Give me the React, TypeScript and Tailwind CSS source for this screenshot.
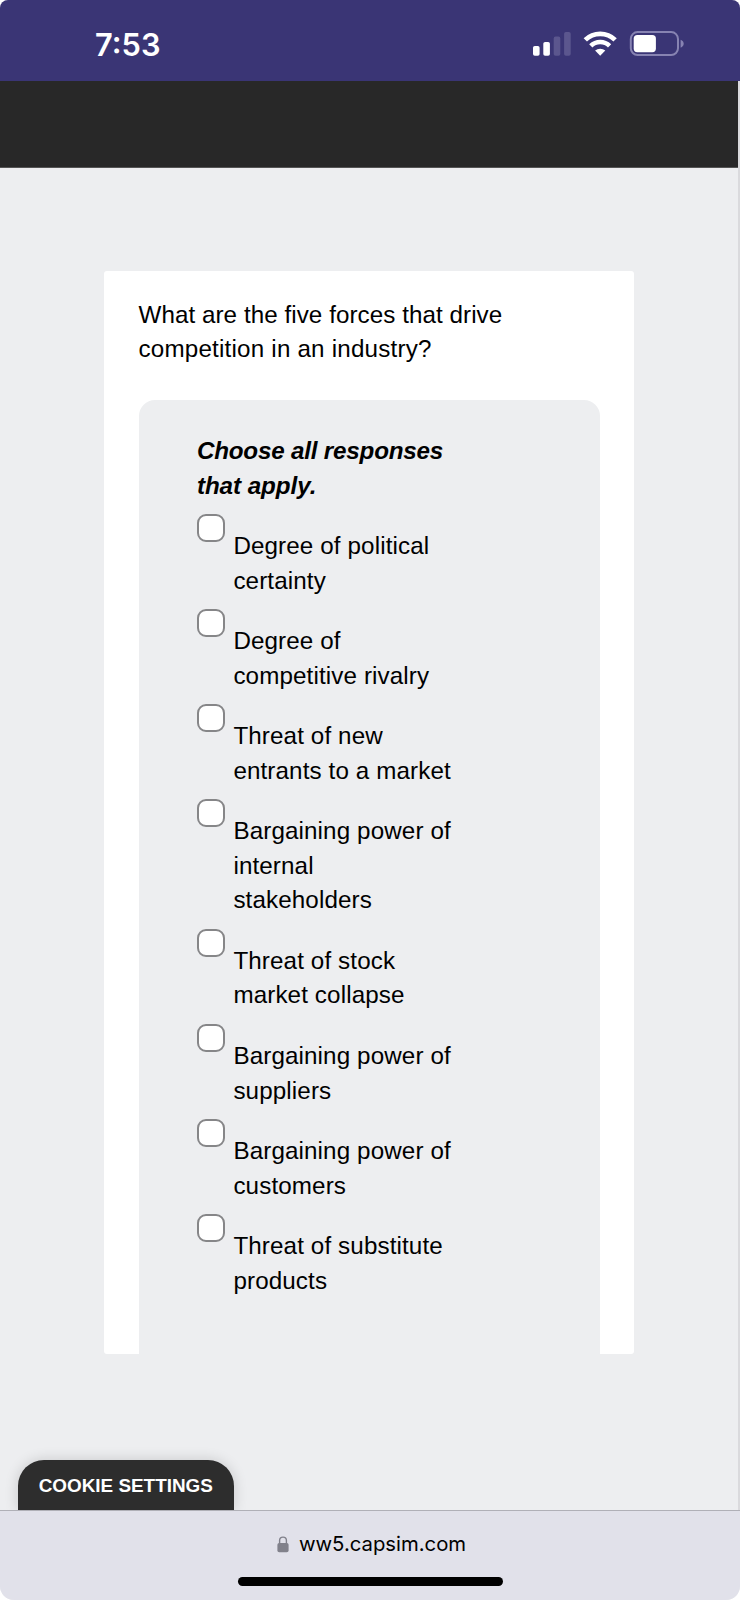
interface Option {
  id: string;
  lines: string[];
}

const options: Option[] = [
  { id: 'political', lines: ['Degree of political', 'certainty'] },
  { id: 'rivalry', lines: ['Degree of', 'competitive rivalry'] },
  { id: 'entrants', lines: ['Threat of new', 'entrants to a market'] },
  { id: 'internal', lines: ['Bargaining power of', 'internal', 'stakeholders'] },
  { id: 'collapse', lines: ['Threat of stock', 'market collapse'] },
  { id: 'suppliers', lines: ['Bargaining power of', 'suppliers'] },
  { id: 'customers', lines: ['Bargaining power of', 'customers'] },
  { id: 'substitute', lines: ['Threat of substitute', 'products'] },
];

function StatusBar() {
  return (
    <header className="flex h-[81px] items-start justify-between bg-[#3a3575] pl-[95px] pr-[55px] text-white">
      <span className="mt-[26px] font-['Inter',sans-serif] text-[30.8px] leading-[38px] font-semibold">7:53</span>
      <svg className="mt-[30px]" width="153" height="27" viewBox="532 30 153 27" fill="none">
        {/* Signal */}
        <rect x="533" y="46" width="6.6" height="9.7" rx="1.8" fill="#fff" />
        <rect x="543.3" y="42" width="6.6" height="13.7" rx="1.8" fill="#fff" />
        <rect x="553.7" y="36.6" width="6.6" height="19.1" rx="1.8" fill="#5b568e" />
        <rect x="564.1" y="32" width="6.6" height="23.7" rx="1.8" fill="#5b568e" />
        {/* Wifi */}
        <path d="M585.3 39.9A21.3 21.3 0 0 1 615.1 39.9" stroke="#fff" strokeWidth="4.8" />
        <path d="M590.8 45.9A13.4 13.4 0 0 1 609.6 45.9" stroke="#fff" strokeWidth="4.6" />
        <path d="M595.1 50.6A7.6 7.6 0 0 1 605.3 50.6L600.2 55.7Z" fill="#fff" />
        {/* Battery */}
        <rect x="630.8" y="32.1" width="47.2" height="22.9" rx="6.8" stroke="#8783b2" strokeWidth="2" />
        <rect x="633.7" y="35" width="22.2" height="17.2" rx="3.6" fill="#fff" />
        <path d="M680.6 39.8C682.6 40.6 683.7 42 683.7 43.7S682.6 46.9 680.6 47.7Z" fill="#8783b2" />
      </svg>
    </header>
  );
}

function OptionRow({ option }: { option: Option }) {
  return (
    <label className="flex items-start">
      <input
        type="checkbox"
        name={option.id}
        className="size-[28px] shrink-0 appearance-none rounded-[9px] border-2 border-[#868688] bg-white"
      />
      <span className="ml-[8.5px] pt-[14.8px] tracking-[0.12px] whitespace-nowrap">
        {option.lines.map((line) => (
          <span key={line} className="block">{line}</span>
        ))}
      </span>
    </label>
  );
}

export default function App() {
  return (
    <div className="bg-white">
      <div className="flex h-[1600px] w-[740px] flex-col overflow-hidden rounded-t-[8px] rounded-b-[14px] bg-[#edeef0] font-['Liberation_Sans',Arial,sans-serif] text-black">
        <StatusBar />

        <div className="flex h-[1429px] flex-col border-r-2 border-[#dadadd]">
          <div className="h-[87px] shrink-0 border-b border-[#555] bg-[#282828]" />

          {/* Question card */}
          <main className="mt-[103px] ml-[104px] flex h-[1083px] w-[530px] shrink-0 flex-col rounded-[3px] bg-white px-[34.5px] pt-[26.5px] text-[24.2px] leading-[34.6px]">
            <h1 className="whitespace-nowrap">
              <span className="block tracking-[0.06px]">What are the five forces that drive</span>
              <span className="block tracking-[0.2px]">competition in an industry?</span>
            </h1>

            <section className="mt-[33.8px] flex-1 rounded-t-[16px] bg-[#edeef0] pt-[33.5px] pl-[58.4px]">
              <p className="font-bold whitespace-nowrap italic">
                <span className="block tracking-[-0.19px]">Choose all responses</span>
                <span className="block tracking-[-0.05px]">that apply.</span>
              </p>
              <div className="mt-[11px] flex flex-col gap-[11.1px]">
                {options.map((option) => (
                  <OptionRow key={option.id} option={option} />
                ))}
              </div>
            </section>
          </main>

          <button className="mt-auto ml-[17.5px] h-[50px] w-[216.5px] shrink-0 rounded-t-[26px] bg-[#2d2d2d] pt-[3px] text-[18.9px] font-bold whitespace-nowrap text-white shadow-[0_0_14px_rgba(0,0,0,0.16)]">
            COOKIE SETTINGS
          </button>
        </div>

        {/* Browser address bar */}
        <footer className="flex flex-1 flex-col items-center border-t border-[#b0b0b7] bg-[#e1e1ea]">
          <div className="mt-[17px] flex h-[32px] items-center gap-[10px] pl-[3px]">
            <svg width="12" height="17" viewBox="0 0 12 17" fill="none">
              <path d="M2.6 8V4.5a3.4 3.4 0 0 1 6.8 0V8" stroke="#81818b" strokeWidth="1.4" />
              <rect x="0.4" y="7" width="11.2" height="9.3" rx="1.8" fill="#81818b" />
            </svg>
            <span className="font-['Inter',sans-serif] text-[20.3px]">ww5.capsim.com</span>
          </div>
          <div className="mt-[17px] h-[9px] w-[265px] rounded-full bg-black" />
        </footer>
      </div>
    </div>
  );
}
